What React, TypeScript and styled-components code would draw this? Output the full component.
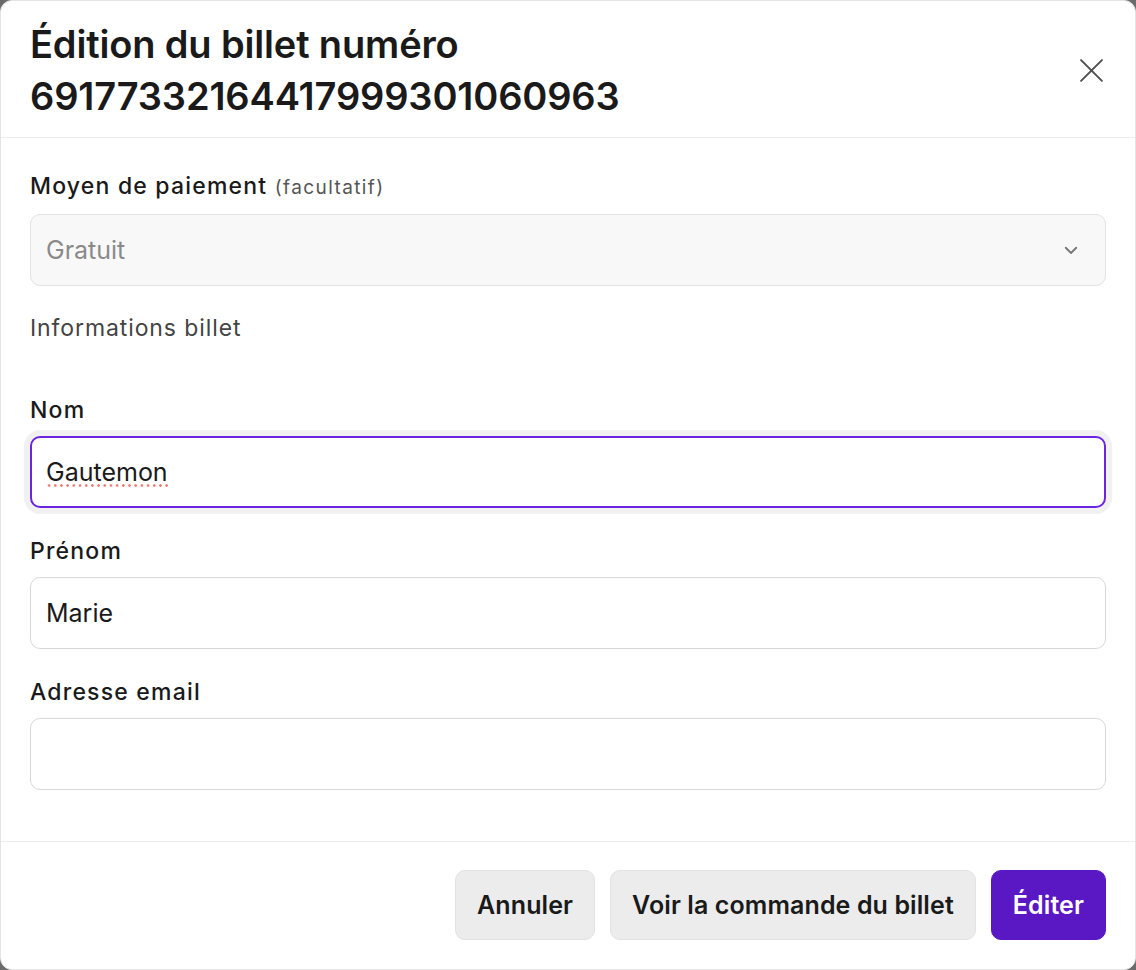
import React from "react";
import styled, { createGlobalStyle } from "styled-components";

const Global = createGlobalStyle`
  html, body { margin: 0; padding: 0; background: #6b6b6b; }
  body { font-family: Inter, "Noto Sans", sans-serif; color: #1a1a1a; }
  * { box-sizing: border-box; }
`;

const Modal = styled.div`
  width: 1136px;
  height: 970px;
  background: #fff;
  border: 1px solid #e4e4e4;
  border-radius: 12px;
  display: flex;
  flex-direction: column;
  overflow: hidden;
`;

const Header = styled.header`
  display: flex;
  align-items: center;
  justify-content: space-between;
  padding: 17px 30px 15px 29px;
  border-bottom: 1px solid #ececec;
`;

const Title = styled.h1`
  margin: 0;
  font-size: 38px;
  line-height: 52px;
  font-weight: 600;
  color: #1a1a1a;
  letter-spacing: -0.15px;
`;

const CloseButton = styled.button`
  border: 0;
  background: transparent;
  padding: 0;
  width: 28px;
  height: 28px;
  display: flex;
  align-items: center;
  justify-content: center;
  color: #505050;
  cursor: pointer;
`;

const Body = styled.main`
  flex: 1;
  display: flex;
  flex-direction: column;
  padding: 33px 29px 0 29px;
`;

const Field = styled.div`
  display: flex;
  flex-direction: column;
  gap: 13px;
  margin-bottom: 28px;
`;

const Label = styled.label`
  padding-top: 2px;
  font-size: 23px;
  line-height: 26px;
  font-weight: 500;
  letter-spacing: 1.2px;
  color: #1a1a1a;
`;

const Optional = styled.span`
  font-size: 19px;
  font-weight: 400;
  letter-spacing: 1.4px;
  color: #555;
`;

const SelectBox = styled.div`
  height: 72px;
  border: 1px solid #e2e2e2;
  border-radius: 10px;
  background: #f8f8f8;
  display: flex;
  align-items: center;
  justify-content: space-between;
  padding: 0 25px 0 15px;
  font-size: 25px;
  color: #8a8a8a;
`;

const SectionTitle = styled.div`
  padding-top: 1px;
  font-size: 23px;
  line-height: 27px;
  letter-spacing: 0.9px;
  color: #444;
  margin-bottom: 53px;
`;

const InputWrap = styled.div`
  position: relative;
`;

const Input = styled.input<{ $focused?: boolean }>`
  display: block;
  height: 72px;
  width: 100%;
  border: ${(p) => (p.$focused ? "2px solid #6b24e0" : "1px solid #d8d8d8")};
  border-radius: 10px;
  padding: 0 ${(p) => (p.$focused ? "14px" : "15px")};
  font-family: inherit;
  font-size: 25px;
  color: #1a1a1a;
  background: #fff;
  outline: none;
  box-shadow: ${(p) => (p.$focused ? "0 0 0 6px #f1f1f1" : "none")};
`;

const SpellMark = styled.span<{ $width: number }>`
  position: absolute;
  left: 16px;
  top: 48px;
  width: ${(p) => p.$width}px;
  height: 3px;
  pointer-events: none;
  background-image: radial-gradient(circle, #ef7b72 1.1px, transparent 1.5px);
  background-size: 6.2px 3px;
  background-repeat: repeat-x;
`;

const Footer = styled.footer`
  display: flex;
  justify-content: flex-end;
  gap: 15px;
  padding: 28px 29px 29px;
  border-top: 1px solid #ececec;
`;

const Button = styled.button<{ $primary?: boolean }>`
  height: 70px;
  padding: 0 21px;
  border-radius: 10px;
  font-family: inherit;
  font-size: 25px;
  font-weight: 600;
  letter-spacing: 0.1px;
  cursor: pointer;
  border: 1px solid ${(p) => (p.$primary ? "#5a18c4" : "#e2e2e2")};
  background: ${(p) => (p.$primary ? "#5a18c4" : "#ececec")};
  color: ${(p) => (p.$primary ? "#fff" : "#1a1a1a")};
`;

const CloseIcon = () => (
  <svg width="25" height="25" viewBox="0 0 24 24" fill="none" stroke="currentColor" strokeWidth="1.9" strokeLinecap="round">
    <path d="M2 2L22 22M22 2L2 22" />
  </svg>
);

const Chevron = () => (
  <svg width="18" height="18" viewBox="0 0 24 24" fill="none" stroke="#777" strokeWidth="2.4" strokeLinecap="round" strokeLinejoin="round">
    <path d="M5 9l7 7 7-7" />
  </svg>
);

export default function App() {
  return (
    <>
      <Global />
      <Modal>
        <Header>
          <Title>
            Édition du billet numéro
            <br />
            69177332164417999301060963
          </Title>
          <CloseButton aria-label="Fermer">
            <CloseIcon />
          </CloseButton>
        </Header>
        <Body>
          <Field>
            <Label>
              Moyen de paiement <Optional>(facultatif)</Optional>
            </Label>
            <SelectBox>
              <span>Gratuit</span>
              <Chevron />
            </SelectBox>
          </Field>
          <SectionTitle>Informations billet</SectionTitle>
          <Field>
            <Label>Nom</Label>
            <InputWrap>
              <Input $focused defaultValue="Gautemon" spellCheck={false} />
              <SpellMark $width={123} />
            </InputWrap>
          </Field>
          <Field>
            <Label>Prénom</Label>
            <Input defaultValue="Marie" spellCheck={false} />
          </Field>
          <Field>
            <Label>Adresse email</Label>
            <Input defaultValue="" />
          </Field>
        </Body>
        <Footer>
          <Button>Annuler</Button>
          <Button>Voir la commande du billet</Button>
          <Button $primary>Éditer</Button>
        </Footer>
      </Modal>
    </>
  );
}
